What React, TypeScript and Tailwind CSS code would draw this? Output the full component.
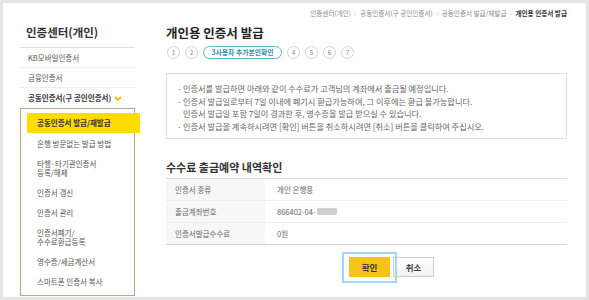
import React from 'react';

const topMenu = ['KB모바일인증서', '금융인증서'];

const subMenu = [
  '은행 방문없는 발급 방법',
  '타행·타기관인증서\n등록/해제',
  '인증서 갱신',
  '인증서 관리',
  '인증서폐기/\n수수료환급등록',
  '영수증/세금계산서',
  '스마트폰 인증서 복사',
];

const crumbs = ['인증센터(개인)', '공동인증서(구 공인인증서)', '공동인증서 발급/재발급'];

const notices = [
  '인증서를 발급하면 아래와 같이 수수료가 고객님의 계좌에서 출금될 예정입니다.',
  '인증서 발급일로부터 7일 이내에 폐기시 환급가능하여, 그 이후에는 환급 불가능합니다.\n인증서 발급일 포함 7일이 경과한 후, 영수증을 발급 받으실 수 있습니다.',
  '인증서 발급을 계속하시려면 [확인] 버튼을 취소하시려면 [취소] 버튼을 클릭하여 주십시오.',
];

const StepCircle: React.FC<{ n: number }> = ({ n }) => (
  <span className="w-[13px] h-[13px] rounded-full border border-[#d3d3d3] flex items-center justify-center text-[6.5px] leading-none text-[#888]">
    {n}
  </span>
);

const App: React.FC = () => {
  return (
    <div className="w-[589px] h-[300px] bg-[#e4e4e4] pt-[3px] pl-[3px] font-['Noto_Sans_CJK_KR',sans-serif] overflow-hidden">
      <div className="w-[583px] h-[294px] bg-white flex">
        {/* left menu */}
        <aside className="ml-[17px] w-[115px] shrink-0">
          <h2 className="pt-[21px] pb-[7px] pl-[6px] text-[11.5px] leading-[16px] font-bold text-[#333] border-b border-[#ddd]">
            인증센터(개인)
          </h2>
          {topMenu.map((m) => (
            <div key={m} className="h-[20px] flex items-center pl-[8px] border-b border-[#eee] text-[7.5px] text-[#555]">
              {m}
            </div>
          ))}
          <div className="h-[20px] flex items-center pl-[8px] text-[7.5px] font-bold text-[#333]">
            공동인증서(구 공인인증서)
            <svg width="8" height="5" viewBox="0 0 8 5" className="ml-[3px]">
              <polyline points="1,1 4,4 7,1" fill="none" stroke="#f2c200" strokeWidth="1.8" />
            </svg>
          </div>
          <div className="border border-[#b9a68e] pt-[4px] pb-[4px]">
            <div className="ml-[6px] w-[113px] h-[20px] bg-[#ffdc00] pl-[10px] flex items-center text-[7.5px] font-bold text-[#333]">
              공동인증서 발급/재발급
            </div>
            {subMenu.map((m) => (
              <div key={m} className="pl-[16px] pt-[6px] pb-[5px] leading-[9px] text-[7.5px] text-[#555] whitespace-pre-line">
                {m}
              </div>
            ))}
          </div>
        </aside>

        {/* main content */}
        <main className="ml-[31px] w-[401px] pt-[5px]">
          <div className="flex justify-end items-center text-[6.6px] leading-[10px] text-[#888]">
            {crumbs.map((c) => (
              <React.Fragment key={c}>
                <span>{c}</span>
                <span className="mx-[3.5px] text-[#aaa]">›</span>
              </React.Fragment>
            ))}
            <span className="font-bold text-[#333]">개인용 인증서 발급</span>
          </div>

          <h1 className="mt-[7px] text-[12.5px] leading-[16px] font-bold text-[#222]">개인용 인증서 발급</h1>

          <div className="mt-[5px] ml-[1px] flex items-center gap-[5px] h-[13px]">
            <StepCircle n={1} />
            <StepCircle n={2} />
            <span className="w-[79px] h-[13px] rounded-full border border-[#5ab4cf] flex items-center justify-center text-[6.8px] leading-none font-bold text-[#2b8db0]">
              3사용자 추가본인확인
            </span>
            <StepCircle n={4} />
            <StepCircle n={5} />
            <StepCircle n={6} />
            <StepCircle n={7} />
          </div>

          <ul className="mt-[14px] border border-[#ddd] pt-[8px] pb-[6px] pl-[10px] space-y-[1px]">
            {notices.map((t) => (
              <li key={t} className="flex text-[8.2px] leading-[12px] text-[#666]">
                <span className="w-[6px] shrink-0">·</span>
                <span className="whitespace-pre-line">{t}</span>
              </li>
            ))}
          </ul>

          <h3 className="mt-[21px] text-[11px] leading-[14px] font-bold text-[#333]">수수료 출금예약 내역확인</h3>

          <div className="mt-[4px] border-t border-[#ddd]">
            <div className="flex h-[22px] border-b border-[#eee] text-[7.5px]">
              <div className="w-[99px] bg-[#f7f7f7] pl-[9px] flex items-center text-[#666]">인증서 종류</div>
              <div className="pl-[12px] flex items-center text-[#666]">개인 은행용</div>
            </div>
            <div className="flex h-[22px] border-b border-[#eee] text-[7.5px]">
              <div className="w-[99px] bg-[#f7f7f7] pl-[9px] flex items-center text-[#666]">출금계좌번호</div>
              <div className="pl-[12px] flex items-center text-[#666]">
                866402-04-
                <span className="ml-[1px] w-[20px] h-[7px] bg-[#cfcfcf] rounded-[1px]" />
              </div>
            </div>
            <div className="flex h-[22px] border-b border-[#d5d5d5] text-[7.5px]">
              <div className="w-[99px] bg-[#f7f7f7] pl-[9px] flex items-center text-[#666]">인증서발급수수료</div>
              <div className="pl-[12px] flex items-center text-[#666]">0원</div>
            </div>
          </div>

          <div className="mt-[12px] ml-[183px] flex gap-[3px]">
            <button className="relative w-[41px] h-[20px] bg-[#f6c418] text-[8.5px] font-bold text-[#333]">
              확인
              <span className="absolute -left-[7px] -right-[7px] -top-[5px] -bottom-[6px] border-2 border-[#a6d3f6] z-10 pointer-events-none" />
            </button>
            <button className="w-[41px] h-[20px] border border-[#cfcfcf] bg-gradient-to-b from-white to-[#f2f2f2] text-[8.5px] font-bold text-[#444]">
              취소
            </button>
          </div>
        </main>
      </div>
    </div>
  );
};

export default App;
